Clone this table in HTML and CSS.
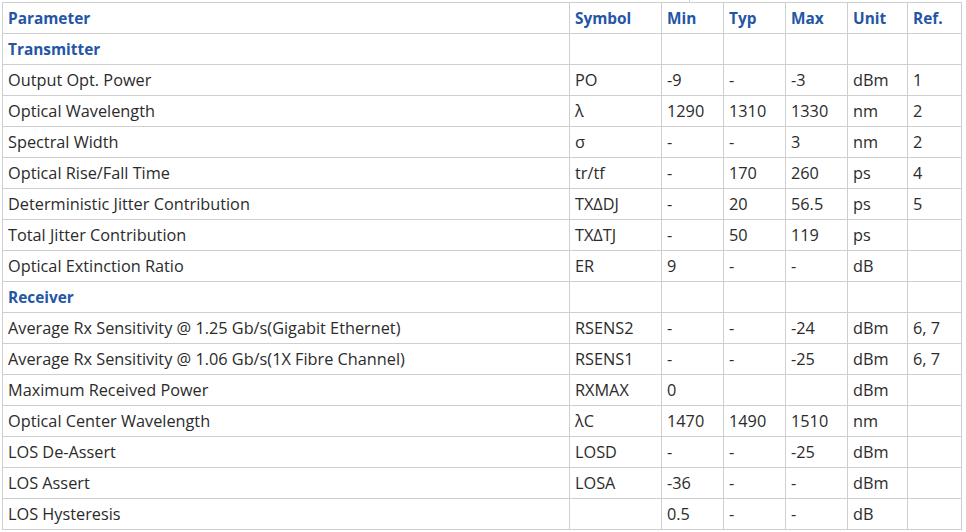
FILE: index.html
```html
<!DOCTYPE html>
<html>
<head>
<meta charset="utf-8">
<link rel="stylesheet" href="styles.css">
</head>
<body>
<div class="prev-edge"></div>
<table class="spec">
  <colgroup>
    <col class="c-param"><col class="c-sym"><col class="c-min"><col class="c-typ"><col class="c-max"><col class="c-unit"><col class="c-ref">
  </colgroup>
  <tr class="head"><td>Parameter</td><td>Symbol</td><td>Min</td><td>Typ</td><td>Max</td><td>Unit</td><td>Ref.</td></tr>
  <tr class="section"><td>Transmitter</td><td></td><td></td><td></td><td></td><td></td><td></td></tr>
  <tr><td>Output Opt. Power</td><td>PO</td><td>-9</td><td>-</td><td>-3</td><td>dBm</td><td>1</td></tr>
  <tr><td>Optical Wavelength</td><td>λ</td><td>1290</td><td>1310</td><td>1330</td><td>nm</td><td>2</td></tr>
  <tr><td>Spectral Width</td><td>σ</td><td>-</td><td>-</td><td>3</td><td>nm</td><td>2</td></tr>
  <tr><td>Optical Rise/Fall Time</td><td>tr/tf</td><td>-</td><td>170</td><td>260</td><td>ps</td><td>4</td></tr>
  <tr><td>Deterministic Jitter Contribution</td><td>TXΔDJ</td><td>-</td><td>20</td><td>56.5</td><td>ps</td><td>5</td></tr>
  <tr><td>Total Jitter Contribution</td><td>TXΔTJ</td><td>-</td><td>50</td><td>119</td><td>ps</td><td></td></tr>
  <tr><td>Optical Extinction Ratio</td><td>ER</td><td>9</td><td>-</td><td>-</td><td>dB</td><td></td></tr>
  <tr class="section"><td>Receiver</td><td></td><td></td><td></td><td></td><td></td><td></td></tr>
  <tr><td>Average Rx Sensitivity @ 1.25 Gb/s(Gigabit Ethernet)</td><td>RSENS2</td><td>-</td><td>-</td><td>-24</td><td>dBm</td><td>6, 7</td></tr>
  <tr><td>Average Rx Sensitivity @ 1.06 Gb/s(1X Fibre Channel)</td><td>RSENS1</td><td>-</td><td>-</td><td>-25</td><td>dBm</td><td>6, 7</td></tr>
  <tr><td>Maximum Received Power</td><td>RXMAX</td><td>0</td><td></td><td></td><td>dBm</td><td></td></tr>
  <tr><td>Optical Center Wavelength</td><td>λC</td><td>1470</td><td>1490</td><td>1510</td><td>nm</td><td></td></tr>
  <tr><td>LOS De-Assert</td><td>LOSD</td><td>-</td><td>-</td><td>-25</td><td>dBm</td><td></td></tr>
  <tr><td>LOS Assert</td><td>LOSA</td><td>-36</td><td>-</td><td>-</td><td>dBm</td><td></td></tr>
  <tr><td>LOS Hysteresis</td><td></td><td>0.5</td><td>-</td><td>-</td><td>dB</td><td></td></tr>
</table>
</body>
</html>
```
FILE: styles.css
```css
html, body {
  margin: 0;
  padding: 0;
  background: #ffffff;
}
body {
  font-family: "Open Sans", "Noto Sans", sans-serif;
  font-size: 16.3px;
  color: #2b2b2b;
}
.prev-edge {
  height: 2px;
  width: 0;
  margin-left: 689px;
  border-left: 1px solid #d0d0d0;
}
.spec {
  margin-left: 2px;
  border-collapse: collapse;
  table-layout: fixed;
  width: 959px;
}
.spec td {
  border: 1px solid #cfcfcf;
  height: 30px;
  padding: 0 5px;
  box-sizing: border-box;
  vertical-align: middle;
  white-space: nowrap;
  overflow: hidden;
  line-height: 20px;
}
.spec tr { height: 31px; }
.c-param { width: 567px; }
.c-sym { width: 92px; }
.c-min { width: 62px; }
.c-typ { width: 62px; }
.c-max { width: 62px; }
.c-unit { width: 60px; }
.c-ref { width: 54px; }
.head td, .section td {
  color: #2556a6;
  font-weight: 700;
  font-size: 15.4px;
  padding-top: 2px;
}
```
